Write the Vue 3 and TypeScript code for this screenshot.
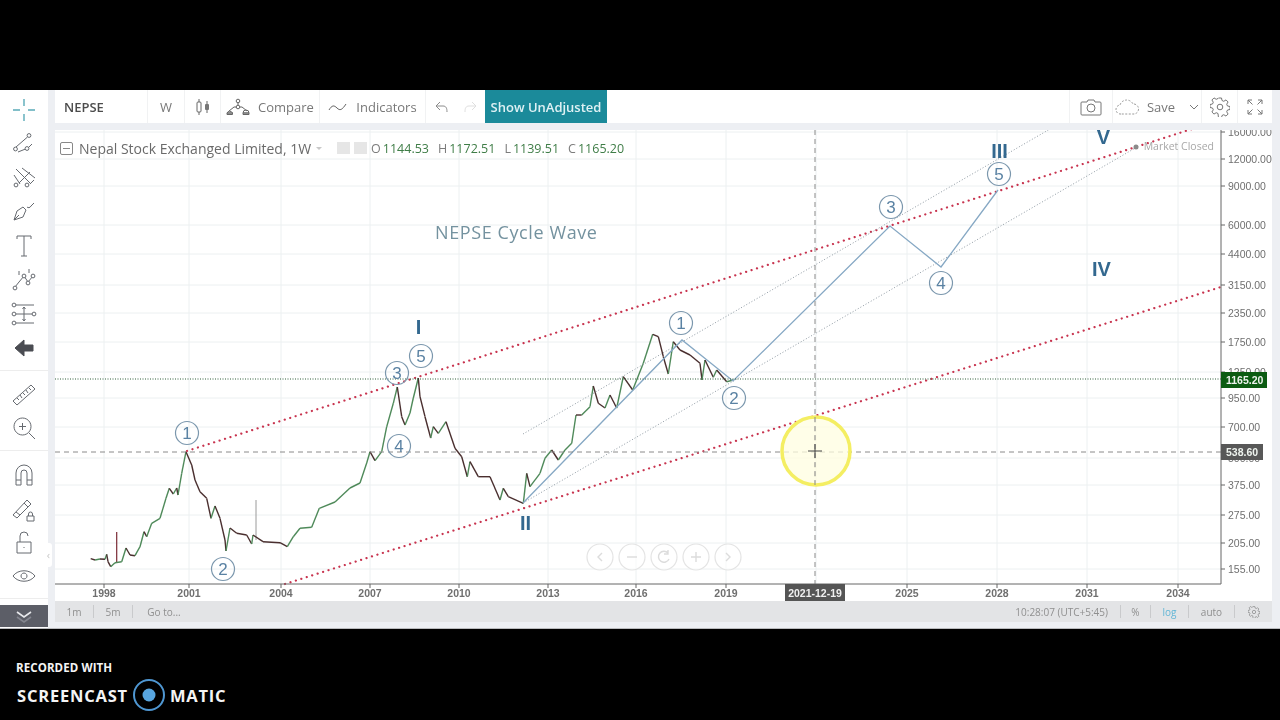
<template>
  <div class="page">
    <div class="letterbox-top"></div>

    <div class="screen">
      <aside class="side">
        <div v-for="(group, g) in toolGroups" :key="g" class="tool-group">
          <div v-for="tool in group" :key="tool.name" class="tool">
            <svg viewBox="0 0 28 28" width="28" height="28" :class="['tool-icon', tool.name]">
              <path :d="tool.d" />
              <circle v-for="(c, i) in tool.dots ?? []" :key="i" :cx="c[0]" :cy="c[1]" r="1.9" />
            </svg>
          </div>
        </div>
        <div class="side-collapse">
          <svg viewBox="0 0 20 20" width="20" height="20">
            <path d="M3 6l7 5 7-5" fill="none" stroke="#e8e9ec" stroke-width="1.6" />
            <path d="M3 11l7 5 7-5" fill="none" stroke="#83858e" stroke-width="1.6" />
          </svg>
        </div>
        <div class="side-handle">‹</div>
      </aside>

      <div class="main">
        <header class="topbar">
          <div class="cell cell-symbol">NEPSE</div>
          <div class="cell cell-interval">W</div>
          <div class="cell cell-style">
            <svg viewBox="0 0 18 18" width="18" height="18">
              <path d="M5 1v3M5 14v3M13 3v3M13 12v3" stroke="#666" fill="none" />
              <rect x="3" y="4" width="4" height="10" rx="1" fill="none" stroke="#666" />
              <rect x="11" y="6" width="4" height="6" rx="1" fill="#777" />
            </svg>
          </div>
          <div class="cell cell-compare">
            <svg viewBox="0 0 24 18" width="24" height="18">
              <path d="M3 13l5-4h8l5 4M12 9V4" fill="none" stroke="#666" />
              <circle cx="12" cy="3" r="1.8" fill="none" stroke="#666" />
              <circle cx="12" cy="9" r="1.8" fill="#fff" stroke="#666" />
              <path d="M1 15a3 3 0 0 1 5.500 0zM17 15a3 3 0 0 1 6 0zM1 15h5.500v1.500H1zM17 15h6v1.500h-6z" fill="none" stroke="#666" />
            </svg>
            <span>Compare</span>
          </div>
          <div class="cell cell-indicators">
            <svg viewBox="0 0 20 12" width="20" height="12">
              <path d="M1 9c3-5 5-5 8-2s5 2 9-4" fill="none" stroke="#666" />
            </svg>
            <span>Indicators</span>
          </div>
          <div class="cell cell-undo">
            <svg viewBox="0 0 14 12" width="14" height="12">
              <path d="M5 1L1 5l4 4M1 5h7c3 0 4 2 4 6" fill="none" stroke="#8c8c8c" />
            </svg>
            <svg viewBox="0 0 14 12" width="14" height="12">
              <path d="M9 1l4 4-4 4M13 5H6c-3 0-4 2-4 6" fill="none" stroke="#dfdfdf" />
            </svg>
          </div>
          <div class="unadjusted">Show UnAdjusted</div>
          <div class="spacer"></div>
          <div class="cell cell-camera">
            <svg viewBox="0 0 22 18" width="22" height="18">
              <path d="M2 4h5l1-2h6l1 2h5a1 1 0 0 1 1 1v11a1 1 0 0 1-1 1H2a1 1 0 0 1-1-1V5a1 1 0 0 1 1-1z" fill="none" stroke="#777" />
              <circle cx="11" cy="10" r="4" fill="none" stroke="#777" />
            </svg>
          </div>
          <div class="cell cell-save">
            <svg viewBox="0 0 24 16" width="24" height="16">
              <path d="M6 15a4.500 4.500 0 0 1-1-9 7 7 0 0 1 13-1 5 5 0 0 1 1 10z" fill="none" stroke="#9a9a9a" stroke-dasharray="2 1.500" />
            </svg>
            <span>Save</span>
            <svg class="caret" viewBox="0 0 10 6" width="10" height="6">
              <path d="M1 1l4 4 4-4" fill="none" stroke="#777" />
            </svg>
          </div>
          <div class="cell cell-gear">
            <svg viewBox="0 0 20 20" width="20" height="20" class="gear">
              <path :d="gearPath" />
              <circle cx="10" cy="10" r="2.800" />
            </svg>
          </div>
          <div class="cell cell-full">
            <svg viewBox="0 0 16 16" width="16" height="16">
              <path d="M1 5V1h4M1 1l4.500 4.500M11 1h4v4M15 1l-4.500 4.500M1 11v4h4M1 15l4.500-4.500M15 11v4h-4M15 15l-4.500-4.500" fill="none" stroke="#777" />
            </svg>
          </div>
        </header>

        <div class="chart-pane">
          <svg class="chart" viewBox="55 130 1217 471" width="1217" height="471">
            <!-- grid -->
            <g class="grid">
              <line v-for="t in timeTicks" :key="t.label" :x1="t.x" y1="130" :x2="t.x" y2="584" />
              <line x1="816" y1="130" x2="816" y2="584" />
              <line v-for="p in priceTicks" :key="p.label" x1="55" :y1="p.y" x2="1221" :y2="p.y" />
            </g>

            <!-- price series -->
            <line x1="116.700" y1="532" x2="116.700" y2="563" stroke="#7a2a35" stroke-width="1.200" />
            <line x1="256" y1="500" x2="256" y2="540" stroke="#9a9a9a" stroke-width="1" />
            <line
              v-for="(s, i) in seriesSegments"
              :key="i"
              :x1="s.x1" :y1="s.y1" :x2="s.x2" :y2="s.y2"
              :stroke="s.color"
              stroke-width="1.400"
            />

            <!-- drawings -->
            <line class="dotted-red" x1="187" y1="451" x2="1192" y2="129" />
            <line class="dotted-red" x1="285" y1="584" x2="1221" y2="287" />
            <line class="dotted-thin" x1="523" y1="434" x2="1050" y2="129" />
            <line class="dotted-thin" x1="523" y1="503" x2="1137" y2="147" />
            <polyline
              class="wave"
              points="523,503 682,340 733,381 890,226 941,267 998,190"
            />
            <line class="last-price" x1="55" y1="379" x2="1221" y2="379" />
            <line class="crosshair" x1="55" y1="452" x2="1221" y2="452" />
            <line class="crosshair" x1="815" y1="130" x2="815" y2="584" />

            <!-- wave labels -->
            <text class="headline" x="435" y="239">NEPSE Cycle Wave</text>
            <g v-for="m in waveMarks" :key="m.x + '-' + m.y">
              <circle class="mark-ring" :cx="m.x" :cy="m.y" r="11.500" />
              <text class="mark-digit" :x="m.x" :y="m.y + 6">{{ m.label }}</text>
            </g>
            <text v-for="r in romans" :key="r.label" class="roman" :x="r.x" :y="r.y">{{ r.label }}</text>

            <circle cx="1136" cy="147" r="2.500" fill="#8a8a8a" />

            <!-- zoom controls -->
            <g v-for="(c, i) in zoomControls" :key="i">
              <circle class="zoom-ring" :cx="c.x" cy="557" r="13" />
              <path class="zoom-glyph" :d="c.d" />
            </g>

            <!-- mouse highlight -->
            <circle cx="816" cy="451" r="34" fill="#fffde0" fill-opacity="0.75" stroke="#f4ee62" stroke-width="3.500" />
            <line class="crosshair" x1="815" y1="417" x2="815" y2="485" />
            <path d="M815 444v14M808 451h14" stroke="#444" stroke-width="1" />

            <!-- axes -->
            <line class="axis" x1="1221" y1="130" x2="1221" y2="584" />
            <line class="axis" x1="55" y1="584" x2="1221" y2="584" />
            <g v-for="p in priceTicks" :key="p.label">
              <line class="axis" x1="1221" :y1="p.y" x2="1225" :y2="p.y" />
              <text class="price-label" x="1228" :y="p.y + 4">{{ p.label }}</text>
            </g>
            <g v-for="t in timeTicks" :key="t.label">
              <line class="axis" :x1="t.x" y1="584" :x2="t.x" y2="588" />
              <text class="time-label" :x="t.x" y="597">{{ t.label }}</text>
            </g>
            <rect x="1221" y="372" width="46" height="16" fill="#0c5c12" />
            <text class="tag-label" x="1226" y="384">1165.20</text>
            <rect x="1221" y="444" width="42" height="16" fill="#585858" />
            <text class="tag-label" x="1226" y="456">538.60</text>
            <rect x="785" y="584" width="60" height="17" fill="#555" />
            <text class="date-label" x="815" y="597">2021-12-19</text>
          </svg>

          <div class="legend">
            <span class="legend-toggle"></span>
            <span class="legend-title">Nepal Stock Exchanged Limited, 1W</span>
            <span class="legend-caret"></span>
            <span class="legend-btn"></span>
            <span class="legend-btn"></span>
            <span class="ohlc" v-for="v in ohlc" :key="v.k"><i>{{ v.k }}</i>{{ v.v }}</span>
          </div>
          <div class="market-closed">Market Closed</div>
        </div>

        <footer class="bottombar">
          <span class="b-item b-1m">1m</span>
          <span class="b-item b-5m">5m</span>
          <span class="b-item b-goto">Go to...</span>
          <span class="spacer"></span>
          <span class="b-clock">10:28:07 <em>(UTC+5:45)</em></span>
          <span class="b-item b-pct">%</span>
          <span class="b-item b-log">log</span>
          <span class="b-item b-auto">auto</span>
          <span class="b-item b-set">
            <svg viewBox="0 0 20 20" width="12" height="12" class="gear">
              <path :d="gearPath" />
              <circle cx="10" cy="10" r="2.800" />
            </svg>
          </span>
        </footer>
      </div>
    </div>

    <div class="recorded">
      <div class="rec-line">RECORDED WITH</div>
      <div class="rec-brand">
        <span>SCREENCAST</span>
        <svg viewBox="0 0 34 34" width="34" height="34">
          <circle cx="17" cy="17" r="15" fill="none" stroke="#4f97d2" stroke-width="2" />
          <circle cx="17" cy="17" r="6.500" fill="#58a6e0" />
        </svg>
        <span>MATIC</span>
      </div>
    </div>
  </div>
</template>

<script setup lang="ts">
import { computed } from "vue";

type Tool = { name: string; d: string; dots?: number[][] };

const toolGroups: Tool[][] = [
  [
    { name: "cross", d: "M14 3v7M14 18v7M3 14h7M18 14h7" },
    {
      name: "trend",
      d: "M6 17L17.500 7M8 22l7.500-3M18.500 17.500L22 14",
      dots: [[19, 5.5], [5.5, 19], [17, 18.500]],
    },
    {
      name: "fib",
      d: "M6 5l14 14M20 8L9 19M12 4l13 10M4 11l6 9M20 20l4-4",
      dots: [[6, 21], [17, 21]],
    },
    { name: "brush", d: "M4 22l3-9 6-4 3 3-3 7-9 3zM4 22l5-5M17 9c1 1 3 1 4-1l3-3" },
    { name: "text", d: "M7 7V4h14v3M14 4v20M11 24h6" },
    {
      name: "pattern",
      d: "M5 21l4-5 5-6 4 6 5-6M9 5v4M19 3v4",
      dots: [[5, 22], [14, 10], [18, 17], [23, 10]],
    },
    {
      name: "predict",
      d: "M6 5h18M6 23h18M6 14h18M14 7v14M12.500 9l1.500-2 1.500 2M12.500 19l1.500 2 1.500-2",
      dots: [[4, 5], [4, 14], [4, 23], [24, 14]],
    },
    { name: "back", d: "M14 6l-9 8 9 8v-5h9v-6h-9z" },
  ],
  [
    { name: "ruler", d: "M3 21L21 5l4 4L7 25zM7 18l2 2M10 15l2 3M13 13l2 2M16 10l2 3M19 8l2 2" },
    { name: "zoom", d: "M12.500 4a8.500 8.500 0 1 0 .01 0zM19 19l6 6M12.500 9v7M9 12.500h7" },
  ],
  [
    { name: "magnet", d: "M6 25V13a8 8 0 0 1 16 0v12h-5V13a3 3 0 0 0-6 0v12zM6 20h5M17 20h5" },
    { name: "pencil", d: "M3 21L17 6l4 4L7 24l-4-3zM6 18l4 3M14 9l4 4M17 22h7v5h-7zM18.500 22v-2a2 2 0 0 1 4 0v2" },
    { name: "lock", d: "M7 14h14v11H7zM10 14V8a4 4 0 0 1 8 0M14 19v1" },
    { name: "eye", d: "M3 14c5-7 17-7 22 0-5 7-17 7-22 0zM14 11a3 3 0 1 0 .01 0z" },
  ],
];

const gearPath =
  "M8.500 1h3l.5 2.500 1.800.8 2.200-1.400 2.100 2.100-1.400 2.200.8 1.800 2.500.5v3l-2.500.5-.8 1.800 1.400 2.200-2.100 2.100-2.200-1.400-1.800.8-.5 2.500h-3L8 16.500l-1.800-.8L4 17.100 1.900 15l1.400-2.200-.8-1.800L0 10.500v-3l2.500-.5.8-1.800L1.900 3 4 .9l2.200 1.400L8 1.500z";

const timeTicks = [
  { label: "1998", x: 104 },
  { label: "2001", x: 189 },
  { label: "2004", x: 281 },
  { label: "2007", x: 370 },
  { label: "2010", x: 459 },
  { label: "2013", x: 548 },
  { label: "2016", x: 636 },
  { label: "2019", x: 726 },
  { label: "2025", x: 907 },
  { label: "2028", x: 997 },
  { label: "2031", x: 1087 },
  { label: "2034", x: 1178 },
];

const priceTicks = [
  { label: "16000.00", y: 132 },
  { label: "12000.00", y: 159 },
  { label: "9000.00", y: 186 },
  { label: "6000.00", y: 225 },
  { label: "4400.00", y: 254 },
  { label: "3150.00", y: 285 },
  { label: "2350.00", y: 313 },
  { label: "1750.00", y: 342 },
  { label: "1250.00", y: 372 },
  { label: "950.00", y: 398 },
  { label: "700.00", y: 427 },
  { label: "500.00", y: 458 },
  { label: "375.00", y: 485 },
  { label: "275.00", y: 515 },
  { label: "205.00", y: 543 },
  { label: "155.00", y: 569 },
];

const series: number[][] = [
  [90.7, 558.7], [95, 560], [100, 559], [105, 559.3], [106.7, 554.3], [108, 561.7], [110.7, 566.7],
  [115, 562.7], [121.7, 561.7], [126, 548], [130, 555], [135, 555.7], [140, 546.7], [144, 531.7],
  [146.7, 536.7], [151.7, 523.3], [160, 518.3], [166, 498.3], [169.3, 488.3], [173.3, 494], [176.7, 488],
  [178, 495], [181.7, 473.3], [186, 451.7], [191.7, 465], [195, 480], [200, 491.7], [206.7, 498.3],
  [211, 518.3], [215, 506], [220, 518.3], [225, 540], [226, 551], [230, 528], [236.7, 533.3],
  [246.7, 535], [251.7, 544], [253, 535], [263, 541.7], [280, 542.7], [287.3, 546.7], [293.3, 536.7],
  [300, 528.3], [311.7, 527.3], [319.3, 508.3], [335, 502], [350, 488], [360, 483], [366.7, 463],
  [370, 451.7], [375, 460.7], [381.7, 451.7], [386.7, 426.7], [393.3, 403.3], [397.3, 387], [401.7, 416.7],
  [405, 425], [410, 413], [413.3, 398], [418.3, 378], [420, 396.7], [425, 416.7], [430.7, 438],
  [433.3, 426.7], [438.3, 433.3], [446, 421.7], [455, 448.3], [461.7, 456.7], [467.3, 476.7], [470, 461.7],
  [478.3, 476.7], [490, 476.7], [500, 500], [503.3, 488.3], [508.3, 496.7], [523.3, 503.3], [526.7, 473.3],
  [530, 486.7], [540, 473.3], [545, 458.3], [551.7, 450], [558.3, 460], [565, 450], [571.7, 443.3],
  [576, 415], [581.7, 415], [590, 406.7], [593.3, 386], [598.3, 403.3], [605, 408], [610, 395],
  [616.7, 408], [623.3, 376.7], [632.7, 390], [643.3, 363.3], [652.7, 334.3], [658.3, 336.7], [663.3, 356.7],
  [668.3, 374], [673.3, 341.7], [680, 350], [690, 355], [700, 363.3], [702, 380], [705, 360],
  [713.3, 377.3], [716.7, 370], [726.7, 381.7], [733.3, 380],
];

const seriesSegments = computed(() =>
  series.slice(1).map((p, i) => {
    const prev = series[i];
    return {
      x1: prev[0],
      y1: prev[1],
      x2: p[0],
      y2: p[1],
      color: p[1] < prev[1] ? "#4f8a5a" : "#4a2f2f",
    };
  }),
);

const waveMarks = [
  { x: 187, y: 433, label: "1" },
  { x: 223, y: 569, label: "2" },
  { x: 397, y: 373, label: "3" },
  { x: 399, y: 446, label: "4" },
  { x: 421, y: 356, label: "5" },
  { x: 681, y: 323, label: "1" },
  { x: 734, y: 398, label: "2" },
  { x: 891, y: 207, label: "3" },
  { x: 941, y: 283, label: "4" },
  { x: 999, y: 174, label: "5" },
];

const romans = [
  { x: 418.5, y: 334, label: "I" },
  { x: 525.5, y: 530, label: "II" },
  { x: 999.5, y: 158, label: "III" },
  { x: 1101.5, y: 276, label: "IV" },
  { x: 1103.5, y: 144, label: "V" },
];

const zoomControls = [
  { x: 600, d: "M602 553l-4 4 4 4" },
  { x: 632, d: "M627 557h10" },
  { x: 664, d: "M668 553a5.500 5.500 0 1 0 1 6M668 550v4h-4" },
  { x: 696, d: "M691 557h10M696 552v10" },
  { x: 728, d: "M726 553l4 4-4 4" },
];

const ohlc = [
  { k: "O", v: "1144.53" },
  { k: "H", v: "1172.51" },
  { k: "L", v: "1139.51" },
  { k: "C", v: "1165.20" },
];
</script>

<style scoped>
.page {
  width: 1280px;
  height: 720px;
  background: #000;
  overflow: hidden;
  font-family: "Open Sans", "Liberation Sans", sans-serif;
}
.letterbox-top {
  height: 90px;
}
.screen {
  position: relative;
  display: flex;
  height: 539px;
  background: #edeff3;
  border-bottom: 1px solid #b9babd;
  box-sizing: border-box;
  filter: blur(0.35px);
}

/* left drawing toolbar */
.side {
  width: 48px;
  background: #fff;
  display: flex;
  flex-direction: column;
  padding-top: 3px;
  box-sizing: border-box;
}
.tool-group {
  padding-bottom: 5px;
  margin-bottom: 6px;
  border-bottom: 1px solid #ededed;
}
.tool-group:first-child {
  padding-bottom: 5px;
}
.tool {
  height: 34px;
  display: flex;
  align-items: center;
  justify-content: center;
}
.tool-icon path {
  fill: none;
  stroke: #666a70;
  stroke-width: 1;
}
.tool-icon circle {
  fill: #fff;
  stroke: #666a70;
  stroke-width: 1;
}
.tool-icon.cross path {
  stroke: #5aabb8;
  stroke-width: 1.4;
}
.tool-icon.back path {
  fill: #4a4c52;
  stroke: #4a4c52;
  stroke-linejoin: round;
}
.side-collapse {
  margin-top: auto;
  height: 22px;
  margin-bottom: 1px;
  background: #5c5e67;
  display: flex;
  align-items: center;
  justify-content: center;
}
.side-handle {
  position: absolute;
  left: 45px;
  top: 453px;
  width: 7px;
  height: 24px;
  background: #fff;
  border-radius: 3px;
  color: #c8c8c8;
  font-size: 11px;
  line-height: 24px;
  text-align: center;
}

.main {
  width: 1217px;
  margin-left: 7px;
  display: flex;
  flex-direction: column;
}

/* top toolbar */
.topbar {
  height: 33px;
  margin-bottom: 7px;
  background: #fff;
  display: flex;
  align-items: stretch;
  color: #787878;
  font-size: 13px;
}
.cell {
  display: flex;
  align-items: center;
  justify-content: center;
  box-sizing: border-box;
  border-right: 1px solid #f1f2f3;
  gap: 8px;
}
.cell-symbol {
  width: 93px;
  justify-content: flex-start;
  padding-left: 9px;
  font-weight: 600;
  color: #4c4c4c;
}
.cell-interval {
  width: 37px;
}
.cell-style {
  width: 36px;
}
.cell-compare {
  width: 99px;
}
.cell-indicators {
  width: 106px;
}
.cell-undo {
  width: 59px;
  gap: 14px;
  border-right: 0;
}
.unadjusted {
  width: 122px;
  background: #1b8a9a;
  color: #dff1f4;
  font-weight: 600;
  font-size: 13px;
  display: flex;
  align-items: center;
  justify-content: center;
}
.spacer {
  flex: 1;
}
.cell-camera {
  width: 44px;
  border-left: 1px solid #f1f2f3;
}
.cell-save {
  width: 89px;
}
.cell-save .caret {
  margin-left: 6px;
}
.cell-gear {
  width: 36px;
}
.cell-full {
  width: 34px;
  border-right: 0;
}
.gear path,
.gear circle {
  fill: none;
  stroke: #777;
  stroke-width: 1;
}

/* chart */
.chart-pane {
  position: relative;
  height: 471px;
  background: #fff;
  overflow: hidden;
}
.chart {
  display: block;
}
.grid line {
  stroke: #ecf0f1;
  stroke-width: 1;
}
.dotted-red {
  stroke: #c8344f;
  stroke-width: 2.2;
  stroke-dasharray: 0.1 5.6;
  stroke-linecap: round;
}
.dotted-thin {
  stroke: #8f9aa3;
  stroke-width: 1;
  stroke-dasharray: 1 2;
}
.wave {
  fill: none;
  stroke: #86a8c4;
  stroke-width: 1.3;
}
.last-price {
  stroke: #2f5f38;
  stroke-width: 1;
  stroke-dasharray: 1 1.5;
}
.crosshair {
  stroke: #8a8a8a;
  stroke-width: 1;
  stroke-dasharray: 5 4;
}
.axis {
  stroke: #666;
  stroke-width: 1;
}
.headline {
  font-family: "Open Sans", sans-serif;
  font-size: 18px;
  letter-spacing: 0.6px;
  fill: #74929f;
}
.mark-ring {
  fill: none;
  stroke: #7b97ad;
  stroke-width: 1.2;
}
.mark-digit {
  font-family: "Liberation Sans", sans-serif;
  font-size: 17px;
  text-anchor: middle;
  fill: #5a82a3;
}
.roman {
  font-family: "Liberation Sans", sans-serif;
  font-size: 20px;
  font-weight: 700;
  text-anchor: middle;
  fill: #33688f;
}
.zoom-ring {
  fill: #fff;
  fill-opacity: 0.6;
  stroke: #e4e4e4;
  stroke-width: 1.2;
}
.zoom-glyph {
  fill: none;
  stroke: #dcdcdc;
  stroke-width: 1.4;
}
.price-label {
  font-family: "Liberation Sans", sans-serif;
  font-size: 10.500px;
  fill: #6f6f6f;
}
.time-label {
  font-family: "Liberation Sans", sans-serif;
  font-size: 10.500px;
  font-weight: 700;
  text-anchor: middle;
  fill: #6f6f6f;
}
.tag-label {
  font-family: "Liberation Sans", sans-serif;
  font-size: 10.500px;
  font-weight: 700;
  fill: #eef3ee;
}
.date-label {
  font-family: "Liberation Sans", sans-serif;
  font-size: 10.500px;
  font-weight: 700;
  text-anchor: middle;
  fill: #f0f0f0;
}

/* legend overlays */
.legend {
  position: absolute;
  left: 5px;
  top: 8px;
  height: 20px;
  display: flex;
  align-items: center;
  color: #6a6a6a;
  font-size: 14px;
  white-space: nowrap;
}
.legend-toggle {
  width: 11px;
  height: 11px;
  border: 1px solid #888;
  border-radius: 2px;
  margin-right: 6px;
  background: linear-gradient(#888, #888) center / 7px 1px no-repeat;
}
.legend-caret {
  margin-left: 5px;
  margin-right: 15px;
  border-left: 3px solid transparent;
  border-right: 3px solid transparent;
  border-top: 3px solid #c8c8c8;
}
.legend-btn {
  width: 13px;
  height: 12px;
  background: #e6e6e6;
  margin-right: 4px;
}
.ohlc {
  color: #3f7d47;
  font-size: 12.500px;
  margin-right: 9px;
}
.ohlc:first-of-type {
  margin-left: 5px;
}
.ohlc i {
  font-style: normal;
  color: #7c7c7c;
  margin-right: 2px;
}
.market-closed {
  position: absolute;
  right: 58px;
  top: 9px;
  font-size: 10.500px;
  color: #a8a8a8;
}

/* bottom bar */
.bottombar {
  height: 21px;
  background: #e3e4e6;
  display: flex;
  align-items: center;
  font-size: 10px;
  color: #8f8f8f;
}
.b-item {
  display: flex;
  align-items: center;
  justify-content: center;
  height: 13px;
  box-sizing: border-box;
  border-right: 1px solid #c9cacc;
}
.b-1m {
  width: 39px;
}
.b-5m {
  width: 39px;
}
.b-goto {
  width: 62px;
  border-right: 0;
}
.b-clock {
  margin-right: 12px;
}
.b-clock em {
  font-style: normal;
}
.b-pct {
  width: 31px;
  border-left: 1px solid #c9cacc;
}
.b-log {
  width: 38px;
  color: #62b6d6;
}
.b-auto {
  width: 46px;
}
.b-set {
  width: 37px;
  border-right: 0;
}

/* recorder watermark */
.recorded {
  padding: 31px 0 0 16px;
  color: #f4f4f4;
  font-weight: 700;
}
.rec-line {
  font-size: 11.500px;
  line-height: 16px;
  letter-spacing: 0.1px;
}
.rec-brand {
  display: flex;
  align-items: center;
  gap: 4px;
  font-size: 16.500px;
  letter-spacing: 0.8px;
  margin-top: 2px;
  margin-left: 1px;
}
</style>

<style>
html,
body {
  margin: 0;
  background: #000;
}
</style>
